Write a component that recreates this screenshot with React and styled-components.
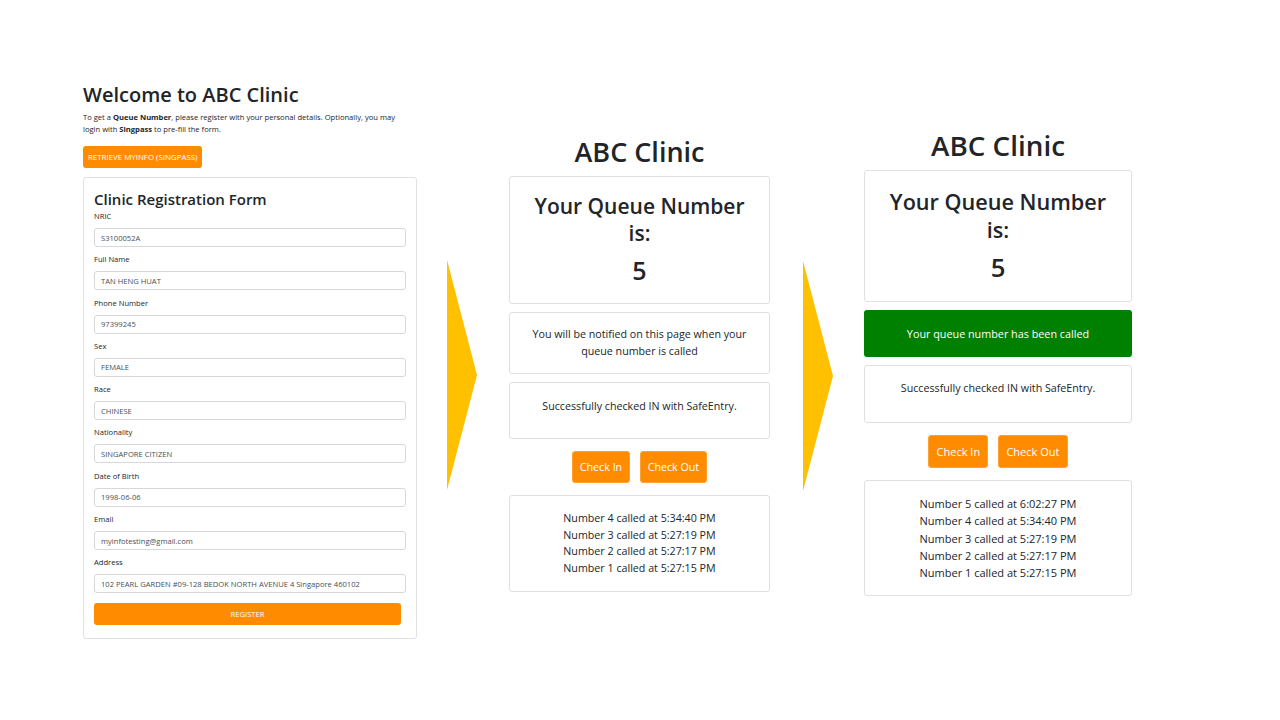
import React from 'react'
import styled, { createGlobalStyle } from 'styled-components';

const GlobalStyle = createGlobalStyle`
  body {
    margin: 0;
    background: #ffffff;
    font-family: "Open Sans", "Noto Sans", sans-serif;
    color: #212529;
  }
`;

const fields = [
  { label: 'NRIC', value: 'S3100052A' },
  { label: 'Full Name', value: 'TAN HENG HUAT' },
  { label: 'Phone Number', value: '97399245' },
  { label: 'Sex', value: 'FEMALE' },
  { label: 'Race', value: 'CHINESE' },
  { label: 'Nationality', value: 'SINGAPORE CITIZEN' },
  { label: 'Date of Birth', value: '1998-06-06' },
  { label: 'Email', value: 'myinfotesting@gmail.com' },
  { label: 'Address', value: '102 PEARL GARDEN #09-128 BEDOK NORTH AVENUE 4 Singapore 460102' },
];

const calledBefore = [
  'Number 4 called at 5:34:40 PM',
  'Number 3 called at 5:27:19 PM',
  'Number 2 called at 5:27:17 PM',
  'Number 1 called at 5:27:15 PM',
];

const calledAfter = ['Number 5 called at 6:02:27 PM', ...calledBefore];

function Arrow({ top, left, right }) {
  return (
    <ArrowBox $top={top} $left={left} $right={right}>
      <svg width="30" height="230" viewBox="0 0 30 230">
        <polygon points="0,0 30,115 0,230" fill="#ffc000" />
      </svg>
    </ArrowBox>
  );
}

function QueueScreen({ top, width, scale, called, list }) {
  return (
    <Screen $top={top} $width={width}>
      <ClinicTitle $scale={scale}>ABC Clinic</ClinicTitle>
      <Card $pad={scale * 16}>
        <QueueHeading $scale={scale}>Your Queue Number<br />is:</QueueHeading>
        <QueueNum $scale={scale}>5</QueueNum>
      </Card>
      {called ? (
        <CalledBox $scale={scale}>Your queue number has been called</CalledBox>
      ) : (
        <Card $pad={13}>
          <InfoText>You will be notified on this page when your<br />queue number is called</InfoText>
        </Card>
      )}
      <Card $pad={called ? 14 : 15} $minH={called ? 58 : 57}>
        <InfoText $scale={scale}>Successfully checked IN with SafeEntry.</InfoText>
      </Card>
      <ButtonRow $scale={scale}>
        <CheckButton $scale={scale}>Check In</CheckButton>
        <CheckButton $scale={scale}>Check Out</CheckButton>
      </ButtonRow>
      <Card $pad={14}>
        {list.map((l) => (
          <ListLine key={l} $scale={scale}>{l}</ListLine>
        ))}
      </Card>
    </Screen>
  );
}

export default function App() {
  return (
    <>
      <GlobalStyle />
      <Slide>
        <LeftPanel>
          <Welcome>Welcome to ABC Clinic</Welcome>
          <Intro>
            To get a <b>Queue Number</b>, please register with your personal details. Optionally, you may<br />
            login with <b>Singpass</b> to pre-fill the form.
          </Intro>
          <MyInfoButton>RETRIEVE MYINFO (SINGPASS)</MyInfoButton>
          <FormCard>
            <FormTitle>Clinic Registration Form</FormTitle>
            {fields.map((f) => (
              <Field key={f.label}>
                <Label>{f.label}</Label>
                <Input readOnly value={f.value} />
              </Field>
            ))}
            <RegisterButton>REGISTER</RegisterButton>
          </FormCard>
        </LeftPanel>

        <Arrow top={260} left={30} right={32} />

        <QueueScreen top={134} width={261} scale={1} list={calledBefore} />

        <Arrow top={261} left={33} right={31} />

        <QueueScreen top={127} width={268} scale={1.03} called list={calledAfter} />
      </Slide>
    </>
  );
}

const Slide = styled.div`
  width: 1280px;
  height: 720px;
  display: flex;
  align-items: flex-start;
  box-sizing: border-box;
  padding-left: 83px;
`;

const LeftPanel = styled.div`
  width: 334px;
  margin-top: 82px;
  display: flex;
  flex-direction: column;
  align-items: flex-start;
`;

const Welcome = styled.h1`
  margin: 0;
  font-size: 20px;
  font-weight: 600;
  line-height: 26px;
`;

const Intro = styled.p`
  margin: 3px 0 0;
  font-size: 7.6px;
  line-height: 12px;
  white-space: nowrap;
`;

const MyInfoButton = styled.div`
  margin-top: 11px;
  height: 22px;
  padding: 0 5px;
  display: flex;
  align-items: center;
  background: #ff8c00;
  color: #fff;
  font-size: 7.9px;
  border-radius: 3px;
`;

const FormCard = styled.div`
  margin-top: 9px;
  width: 100%;
  box-sizing: border-box;
  border: 1px solid #e2e2e2;
  border-radius: 3px;
  padding: 10px 10px 13px;
  display: flex;
  flex-direction: column;
`;

const FormTitle = styled.h2`
  margin: 0;
  font-size: 15px;
  font-weight: 600;
  line-height: 23px;
`;

const Field = styled.div`
  display: flex;
  flex-direction: column;
  margin-bottom: 7.3px;
`;

const Label = styled.label`
  font-size: 7.6px;
  line-height: 11px;
  margin-bottom: 6px;
`;

const Input = styled.input`
  box-sizing: border-box;
  height: 19px;
  width: 100%;
  border: 1px solid #d6d8db;
  border-radius: 3px;
  padding: 0 6px;
  font-family: "Open Sans", "Noto Sans", sans-serif;
  font-size: 7.6px;
  color: #495057;
  background: #fff;
  outline: none;
`;

const RegisterButton = styled.div`
  margin-top: 2px;
  width: 307px;
  height: 22px;
  display: flex;
  align-items: center;
  justify-content: center;
  background: #ff8c00;
  color: #fff;
  font-size: 7.6px;
  border-radius: 3px;
`;

const ArrowBox = styled.div`
  margin-top: ${(p) => p.$top}px;
  margin-left: ${(p) => p.$left}px;
  margin-right: ${(p) => p.$right}px;
  width: 30px;
  height: 230px;
  svg {
    display: block;
  }
`;

const Screen = styled.div`
  margin-top: ${(p) => p.$top}px;
  width: ${(p) => p.$width}px;
  display: flex;
  flex-direction: column;
  align-items: stretch;
  text-align: center;
`;

const ClinicTitle = styled.div`
  font-size: ${(p) => 27 * p.$scale}px;
  font-weight: 600;
  line-height: ${(p) => 36 * p.$scale}px;
  margin-bottom: ${(p) => 6 * p.$scale}px;
`;

const Card = styled.div`
  border: 1px solid #e0e0e0;
  border-radius: 3px;
  padding: ${(p) => p.$pad}px 10px;
  min-height: ${(p) => (p.$minH ? `${p.$minH}px` : 'auto')};
  box-sizing: border-box;
  margin-bottom: 8px;
`;

const QueueHeading = styled.div`
  font-size: ${(p) => 21 * p.$scale}px;
  font-weight: 600;
  line-height: ${(p) => 27 * p.$scale}px;
`;

const QueueNum = styled.div`
  margin-top: ${(p) => 6 * p.$scale}px;
  font-size: ${(p) => 25 * p.$scale}px;
  font-weight: 600;
  line-height: ${(p) => 34 * p.$scale}px;
`;

const InfoText = styled.div`
  font-size: 10.7px;
  line-height: 17px;
  color: #212529;
`;

const CalledBox = styled.div`
  background: #008000;
  color: #fff;
  border-radius: 3px;
  height: 47px;
  display: flex;
  align-items: center;
  justify-content: center;
  font-size: 10.8px;
  margin-bottom: 8px;
`;

const ButtonRow = styled.div`
  display: flex;
  justify-content: center;
  gap: ${(p) => 9.5 * p.$scale}px;
  margin: 4px 0 ${(p) => 12 * p.$scale}px;
`;

const CheckButton = styled.div`
  height: ${(p) => 30 * p.$scale}px;
  padding: 0 ${(p) => 7 * p.$scale}px;
  display: flex;
  align-items: center;
  background: #ff8c00;
  border: 1px solid #ffa033;
  color: #fff;
  font-size: ${(p) => 10.7 * p.$scale}px;
  border-radius: 3px;
`;

const ListLine = styled.div`
  font-size: ${(p) => 10.7 * p.$scale}px;
  line-height: ${(p) => 16.7 * p.$scale}px;
`;
